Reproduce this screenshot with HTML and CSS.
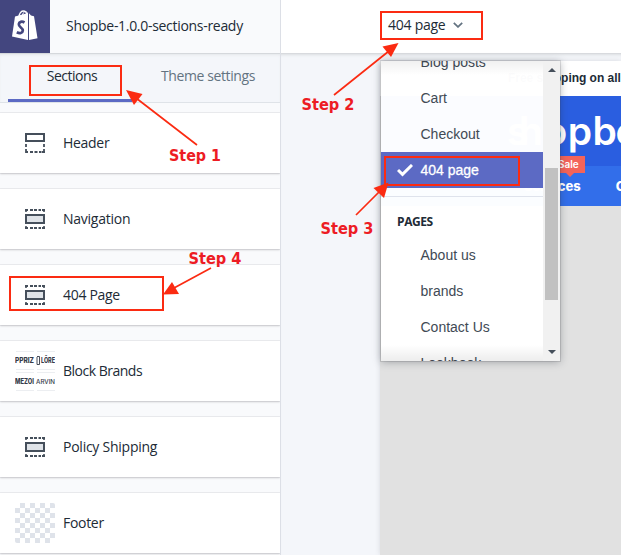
FILE: index.html
```html
<!DOCTYPE html>
<html lang="en">
<head>
<meta charset="utf-8">
<title>Shopbe theme editor</title>
<link rel="stylesheet" href="styles.css">
</head>
<body>
<div class="editor">
  <aside class="sidebar">
    <header class="brand">
      <div class="brand-logo">
        <svg width="50" height="53" viewBox="0 0 50 53">
          <path d="M19 17c0-3 2-6 4-6 3 0 4 2 4 5" fill="none" stroke="#fff" stroke-width="1.3"/>
          <path d="M15 16.500 28 13v27L12 36.500z" fill="#fff"/>
          <path d="M29 13.200 31 15.500l3 .7 3.500 22L29 40z" fill="#fff"/>
          <path d="M22 16c1-3 2-4.500 3.500-4.500 1.500 0 2 1.500 2 3.500" fill="none" stroke="#fff"/>
          <path d="M24.500 22.500c-2.500-1.500-5.500-.8-5.700 1.700-.2 3.300 4.200 3.300 4 6.500-.2 2.500-3 3.200-6 1.600" fill="none" stroke="#43467f" stroke-width="2.700"/>
        </svg>
      </div>
      <div class="brand-name">Shopbe-1.0.0-sections-ready</div>
    </header>
    <nav class="tabs">
      <div class="tab tab-active"><span class="tab-sections">Sections</span></div>
      <div class="tab"><span class="tab-theme">Theme settings</span></div>
    </nav>
    <div class="cards">
      <div class="card"><div class="thumb">
        <svg width="20" height="20" viewBox="0 0 20 20" fill="none" stroke="#454f5b" stroke-width="2"><rect x="1" y="1" width="18" height="7"/><path d="M1 11v3M19 11v3M1 16v4M19 16v4M1 19h2M5 19h3M9.500 19h3M14 19h2.500M17 19h3" stroke-width="1.800"/></svg>
      </div><span class="label">Header</span></div>
      <div class="card"><div class="thumb">
        <svg width="20" height="20" viewBox="0 0 20 20"><use href="#block"/></svg>
      </div><span class="label label-nav">Navigation</span></div>
      <div class="card"><div class="thumb">
        <svg width="20" height="20" viewBox="0 0 20 20"><use href="#block"/></svg>
      </div><span class="label">404 Page</span></div>
      <div class="card"><div class="thumb">
        <svg width="40" height="40" viewBox="0 0 40 40">
          <path d="M1 .5h18M22 .5h18M1 18.500h18M22 18.500h18M1 21.500h18M22 21.500h18M1 39.500h18M22 39.500h18" stroke="#eceef1"/>
          <g class="mini">
            <text x="0" y="12" textLength="19" lengthAdjust="spacingAndGlyphs">PPRIZ</text>
            <text x="26" y="12" textLength="14" lengthAdjust="spacingAndGlyphs">LÔRE</text>
            <text x="0" y="33" textLength="19" lengthAdjust="spacingAndGlyphs">MEZOI</text>
            <text class="mini-light" x="21" y="33" textLength="19" lengthAdjust="spacingAndGlyphs">ARVIN</text>
          </g>
          <path d="M22 6v7.500h2.500V5.500H22" fill="none" stroke="#353b48" stroke-width=".9"/>
        </svg>
      </div><span class="label label-brands">Block Brands</span></div>
      <div class="card"><div class="thumb">
        <svg width="20" height="20" viewBox="0 0 20 20"><use href="#block"/></svg>
      </div><span class="label label-nav">Policy Shipping</span></div>
      <div class="card"><div class="thumb"><div class="checker"></div></div><span class="label">Footer</span></div>
    </div>
  </aside>

  <main class="main">
    <header class="topbar">
      <div class="page-select"><span>404 page</span>
        <svg width="10" height="6" viewBox="0 0 10 6"><path d="M.8.8 5 4.900 9.200.8" fill="none" stroke="#637381" stroke-width="1.700"/></svg>
      </div>
    </header>
    <div class="stage">
      <section class="preview">
        <div class="announce">Free shipping on all</div>
        <div class="shop-head">
          <svg width="240" height="70" viewBox="381 96 240 70"><text class="shop-logo" y="144.500" x="507 519 543.500 567.700 592.500 615.500">shopbe</text></svg>
        </div>
        <div class="shop-nav"><span class="services">Services<span class="sale">Sale</span></span><span class="next">Contact</span></div>
      </section>
    </div>
    <div class="menu">
      <div class="menu-list">
        <div class="item">Blog posts</div>
        <div class="item">Cart</div>
        <div class="item">Checkout</div>
        <div class="item item-active">
          <svg width="16" height="13" viewBox="0 0 16 13"><path d="M1 6 5.500 10.300 15 1" fill="none" stroke="#fff" stroke-width="3"/></svg>404 page</div>
        <div class="group"><span>PAGES</span></div>
        <div class="item">About us</div>
        <div class="item">brands</div>
        <div class="item">Contact Us</div>
        <div class="item">Lookbook</div>
      </div>
      <div class="scroll">
        <div class="arrow-up"></div>
        <div class="thumb-bar"></div>
        <div class="arrow-down"></div>
      </div>
    </div>
  </main>
</div>

<svg class="notes" width="621" height="555" viewBox="0 0 621 555">
  <defs>
    <g id="block" fill="none" stroke="#454f5b" stroke-width="2">
      <rect x="1" y="6" width="18" height="8" fill="#dfe3e8"/>
      <path d="M0 1h3M5 1h3M9 1h3M13.500 1h2.500M17 1h3M0 19h3M5 19h3M9 19h3M13.500 19h2.500M17 19h3" stroke-width="1.800"/>
      <path d="M1 0v3M19 0v3M1 17v3M19 17v3" stroke-width="1.600"/>
    </g>
  </defs>
  <g fill="none" stroke="#fb2b12" stroke-width="2">
    <rect x="30" y="66" width="91" height="29"/>
    <rect x="381" y="12" width="101" height="27"/>
    <rect x="385" y="157" width="134" height="28"/>
    <rect x="10" y="277" width="153" height="33"/>
    <path d="M197 145 136 98M334 95l55-44M356 215l25-25M211 268l-37 20" stroke-width="1.700"/>
  </g>
  <g fill="#fb2b12">
    <path d="M126 90 142.500 94 134 105z"/>
    <path d="M398.500 43 391 57 382.500 46.500z"/>
    <path d="M388.500 182.500 384 198 373.500 188z"/>
    <path d="M163 294.500 172 282 179 294z"/>
  </g>
  <g class="step">
    <text x="169" y="161" textLength="52" lengthAdjust="spacingAndGlyphs">Step 1</text>
    <text x="301.500" y="110" textLength="53" lengthAdjust="spacingAndGlyphs">Step 2</text>
    <text x="320.500" y="234" textLength="53" lengthAdjust="spacingAndGlyphs">Step 3</text>
    <text x="188.500" y="264" textLength="53" lengthAdjust="spacingAndGlyphs">Step 4</text>
  </g>
</svg>
</body>
</html>
```
FILE: styles.css
```css
* { box-sizing: border-box; }
body {
  margin: 0;
  width: 621px;
  height: 555px;
  overflow: hidden;
  position: relative;
  font-family: "Open Sans", "Noto Sans", sans-serif;
  font-size: 14px;
  color: #212b36;
  background: #f4f6fa;
}
.editor { display: flex; height: 555px; }

.sidebar {
  width: 281px;
  flex: none;
  border-right: 1px solid #dcdfe6;
  background: #f9fafc;
  overflow: hidden;
}
.brand { display: flex; height: 53px; }
.brand-logo { width: 50px; height: 53px; background: #43467f; }
.brand-name {
  padding-left: 16px;
  line-height: 51px;
  white-space: nowrap;
  letter-spacing: -0.3px;
}
.tabs {
  display: flex;
  height: 50px;
  padding: 0 8px;
  background: #f4f6fa;
  border-bottom: 1px solid #dfe3e8;
  box-shadow: inset 0 1px 0 #d5d8dc, inset 0 3px 3px -1px #e4e7ea;
}
.tab {
  flex: none;
  height: 49px;
  line-height: 46px;
  text-align: center;
  color: #637381;
  white-space: nowrap;
}
.tab-active { width: 124px; color: #212b36; border-bottom: 3px solid #5c6ac4; }
.tab + .tab { width: 140px; margin-left: 6px; }
.tab-sections { padding-left: 4px; letter-spacing: -0.5px; }
.tab-theme { letter-spacing: -0.4px; }

.cards { display: flex; flex-direction: column; gap: 16px; padding-top: 10px; }
.card {
  display: flex;
  align-items: center;
  gap: 8px;
  height: 60px;
  flex: none;
  padding-left: 15px;
  background: #fff;
  box-shadow: 0 0 0 1px rgba(63, 63, 68, .07), 0 1px 2px rgba(63, 63, 68, .22);
}
.label { padding-bottom: 2px; letter-spacing: -0.3px; }
.label-nav { letter-spacing: -0.25px; }
.label-brands { letter-spacing: -0.5px; }
.thumb { width: 40px; height: 40px; display: flex; align-items: center; justify-content: center; }
.mini { font: 800 7px Inter, sans-serif; fill: #353b48; }
.mini-light { font-weight: 500; font-size: 6px; }
.checker {
  width: 40px;
  height: 40px;
  border-radius: 2px;
  background: repeating-conic-gradient(#dfe3ea 0 25%, #fff 0 50%) 0 0 / 10px 10px;
}

.main { flex: 1; position: relative; min-width: 0; }
.topbar {
  height: 54px;
  background: #fff;
  border-bottom: 1px solid #d8dade;
  padding-left: 107px;
}
.page-select { display: flex; align-items: center; gap: 8px; height: 49px; letter-spacing: -0.25px; }
.page-select span { padding-bottom: 1px; }
.stage { padding: 7px 0 0 99px; height: 501px; box-shadow: inset 0 3px 3px -2px #dadde0; }
.preview { height: 494px; background: #e1e1e1; overflow: hidden; box-shadow: 0 0 5px rgba(63, 63, 68, .15); }
.announce {
  height: 35px;
  padding-left: 128px;
  background: #fff;
  font: bold 12px/35px "Liberation Sans", Arial, sans-serif;
  letter-spacing: -0.03px;
  white-space: nowrap;
}
.shop-head, .shop-nav { margin-left: 1px; }
.shop-head { height: 70px; background: #2a5ee0; }
.shop-head svg { display: block; }
.shop-logo { font: 600 39px Inter, sans-serif; fill: #fff; }
.shop-nav {
  height: 40px;
  display: flex;
  background: #326eea;
  color: #fff;
  font: 800 13px/41px Inter, sans-serif;
  padding-left: 143px;
  gap: 35px;
}
.services { position: relative; width: 59px; display: flex; justify-content: flex-end; }
.sale {
  position: absolute;
  right: -4px;
  top: -10px;
  padding: 0 6px 0 4px;
  font: 600 10px/17px Inter, sans-serif;
  background: #f4645a;
}
.sale::after {
  content: "";
  position: absolute;
  left: 12px;
  top: 17px;
  border: 4px solid transparent;
  border-top-color: #f4645a;
}

.menu {
  position: absolute;
  left: 100px;
  top: 61px;
  width: 179px;
  height: 300px;
  display: flex;
  overflow: hidden;
  background: rgba(255, 255, 255, .985);
  box-shadow: 0 0 0 1px rgba(63, 63, 68, .15), 0 1px 8px rgba(33, 43, 54, .35);
  font: 14px "Liberation Sans", Arial, sans-serif;
  color: #414a55;
}
.menu-list { width: 162px; flex: none; height: 332px; margin-top: -17px; }
.menu::after {
  content: "";
  position: absolute;
  inset: 0 17px 0 0;
  background: linear-gradient(rgba(0, 0, 0, .06), transparent 14px, transparent 284px, rgba(0, 0, 0, .07));
}
.item { height: 36px; line-height: 37px; padding-left: 39.500px; }
.item-active {
  display: flex;
  align-items: center;
  gap: 8px;
  padding-left: 15.500px;
  color: #fff;
  background: #5c6ac4;
  -webkit-text-stroke: .3px #fff;
}
.group { height: 49px; padding-top: 8px; }
.group span {
  display: block;
  border-top: 1px solid #dfe3ec;
  padding: 15px 0 0 16px;
  font: bold 12px/20px "Open Sans", sans-serif;
  letter-spacing: -0.4px;
  color: #212b36;
}
.scroll { width: 17px; flex: none; height: 300px; background: #f1f1f1; display: flex; flex-direction: column; align-items: center; }
.arrow-up { margin-top: 7px; border: 4px solid transparent; border-top: 0; border-bottom-color: #454f5b; }
.thumb-bar { width: 13px; height: 132px; margin-top: 96px; background: #c1c1c1; }
.arrow-down { margin-top: 50px; border: 4px solid transparent; border-bottom: 0; border-top-color: #454f5b; }

.notes { position: absolute; left: 0; top: 0; pointer-events: none; }
.step { font: bold 15.500px "DejaVu Sans", sans-serif; fill: #ed1c24; }
```
